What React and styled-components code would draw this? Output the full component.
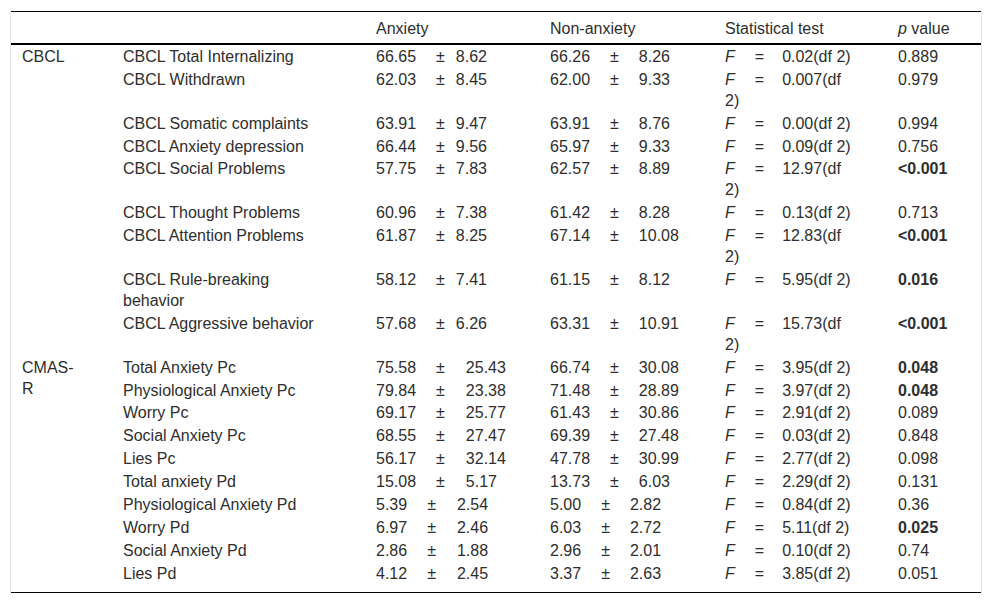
import React from "react";
import styled, { createGlobalStyle } from "styled-components";

const Global = createGlobalStyle`
  html, body { margin: 0; padding: 0; background: #ffffff; }
  body { font-family: "Liberation Sans", Arial, sans-serif; color: #2e2e2e; }
`;

const Page = styled.div`
  padding: 11px 0 0 10px;
`;

const Frame = styled.div`
  width: 970px;
  border-left: 1px solid #e6e6e6;
  border-right: 1px solid #e6e6e6;
`;

const Table = styled.table`
  width: 970px;
  table-layout: fixed;
  border-collapse: separate;
  border-spacing: 0;
  border-top: 1px solid #000;
  border-bottom: 1px solid #000;
  font-size: 16px;
  line-height: 20.9px;
`;

const HeadCell = styled.th`
  text-align: left;
  font-weight: normal;
  white-space: nowrap;
  padding: 7px ${(p) => (p.$last ? 8 : 32)}px 3px 11px;
  border-bottom: 2px solid #000;
  vertical-align: bottom;
`;

const Row = styled.tr`
  &:last-child td { padding-bottom: 7px; }
`;

const Cell = styled.td`
  padding: 2px ${(p) => (p.$last ? 8 : 32)}px 0 11px;
  vertical-align: top;
  font-weight: ${(p) => (p.$bold ? "bold" : "normal")};
`;

const Stat = styled.span`
  display: inline-flex;
  white-space: nowrap;
`;

const Pm = styled.span`
  margin: 0 ${(p) => p.$after}px 0 20px;
`;

const Italic = styled.i`
  font-style: italic;
`;

const Eq = styled.span`
  margin: 0 18px 0 20px;
`;

const cols = [101, 253, 174, 175, 173, 94];

const groups = [
  {
    name: "CBCL",
    gap: 11,
    rows: [
      ["CBCL Total Internalizing", "66.65", "8.62", "66.26", "8.26", "0.02", "0.889"],
      ["CBCL Withdrawn", "62.03", "8.45", "62.00", "9.33", "0.007", "0.979"],
      ["CBCL Somatic complaints", "63.91", "9.47", "63.91", "8.76", "0.00", "0.994"],
      ["CBCL Anxiety depression", "66.44", "9.56", "65.97", "9.33", "0.09", "0.756"],
      ["CBCL Social Problems", "57.75", "7.83", "62.57", "8.89", "12.97", "<0.001", true],
      ["CBCL Thought Problems", "60.96", "7.38", "61.42", "8.28", "0.13", "0.713"],
      ["CBCL Attention Problems", "61.87", "8.25", "67.14", "10.08", "12.83", "<0.001", true],
      ["CBCL Rule-breaking behavior", "58.12", "7.41", "61.15", "8.12", "5.95", "0.016", true],
      ["CBCL Aggressive behavior", "57.68", "6.26", "63.31", "10.91", "15.73", "<0.001", true],
    ],
  },
  {
    name: "CMAS-R",
    gap: 21,
    rows: [
      ["Total Anxiety Pc", "75.58", "25.43", "66.74", "30.08", "3.95", "0.048", true],
      ["Physiological Anxiety Pc", "79.84", "23.38", "71.48", "28.89", "3.97", "0.048", true],
      ["Worry Pc", "69.17", "25.77", "61.43", "30.86", "2.91", "0.089"],
      ["Social Anxiety Pc", "68.55", "27.47", "69.39", "27.48", "0.03", "0.848"],
      ["Lies Pc", "56.17", "32.14", "47.78", "30.99", "2.77", "0.098"],
      ["Total anxiety Pd", "15.08", "5.17", "13.73", "6.03", "2.29", "0.131"],
      ["Physiological Anxiety Pd", "5.39", "2.54", "5.00", "2.82", "0.84", "0.36"],
      ["Worry Pd", "6.97", "2.46", "6.03", "2.72", "5.11", "0.025", true],
      ["Social Anxiety Pd", "2.86", "1.88", "2.96", "2.01", "0.10", "0.74"],
      ["Lies Pd", "4.12", "2.45", "3.37", "2.63", "3.85", "0.051"],
    ],
  },
];

function MeanSd({ mean, sd, after = 20 }) {
  return (
    <Stat>
      {mean}
      <Pm $after={after}>±</Pm>
      {sd}
    </Stat>
  );
}

export default function App() {
  return (
    <>
      <Global />
      <Page>
        <Frame>
          <Table>
            <colgroup>
              {cols.map((w, i) => (
                <col key={i} style={{ width: w }} />
              ))}
            </colgroup>
            <thead>
              <tr>
                <HeadCell />
                <HeadCell />
                <HeadCell>Anxiety</HeadCell>
                <HeadCell>Non-anxiety</HeadCell>
                <HeadCell>Statistical test</HeadCell>
                <HeadCell $last>
                  <Italic>p</Italic> value
                </HeadCell>
              </tr>
            </thead>
            <tbody>
              {groups.map((g) =>
                g.rows.map((r, i) => (
                  <Row key={g.name + i}>
                    {i === 0 && <Cell rowSpan={g.rows.length}>{g.name}</Cell>}
                    <Cell>{r[0]}</Cell>
                    <Cell>
                      <MeanSd mean={r[1]} sd={r[2]} after={g.gap} />
                    </Cell>
                    <Cell>
                      <MeanSd mean={r[3]} sd={r[4]} />
                    </Cell>
                    <Cell>
                      <Italic>F</Italic>
                      <Eq>=</Eq>
                      {r[5]}(df 2)
                    </Cell>
                    <Cell $last $bold={r[7]}>
                      {r[6]}
                    </Cell>
                  </Row>
                ))
              )}
            </tbody>
          </Table>
        </Frame>
      </Page>
    </>
  );
}
